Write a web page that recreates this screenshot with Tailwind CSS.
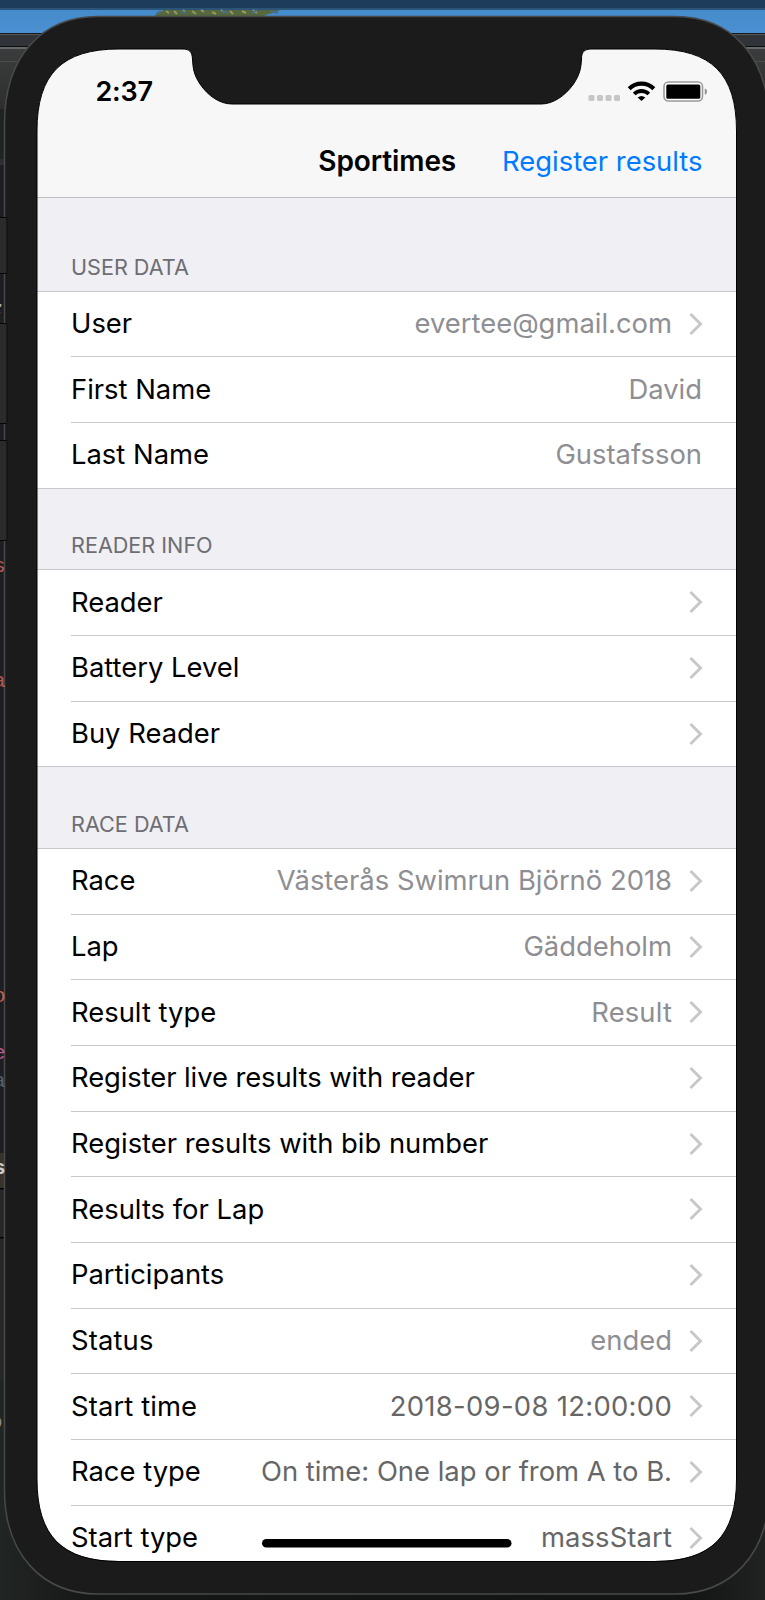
<!DOCTYPE html>
<html lang="en">
<head>
<meta charset="utf-8">
<title>Sportimes</title>
<script src="https://cdn.jsdelivr.net/npm/@tailwindcss/browser@4"></script>
</head>
<body class="bg-[#1c1e22]">
<div class="relative flex h-[1600px] w-[765px] flex-col overflow-hidden font-['Inter',sans-serif]">

  <!-- Desktop behind the device -->
  <svg class="absolute inset-0" width="765" height="1600" viewBox="0 0 765 1600" aria-hidden="true">
    <defs>
      <linearGradient id="sky" x1="0" x2="0" y1="0" y2="1"><stop offset="0" stop-color="#458ccc"/><stop offset="1" stop-color="#4b90d2"/></linearGradient>
      <linearGradient id="bar" x1="0" x2="0" y1="0" y2="1"><stop offset="0" stop-color="#3b3d3c"/><stop offset="1" stop-color="#2d2f2e"/></linearGradient>
      <linearGradient id="base" x1="0" x2="1" y1="0" y2="0"><stop offset="0" stop-color="#212524"/><stop offset=".12" stop-color="#151716"/><stop offset=".9" stop-color="#131414"/><stop offset="1" stop-color="#202322"/></linearGradient>
    </defs>
    <rect width="765" height="1600" fill="#1c1e22"/>
    <rect width="765" height="8" fill="#1d3c5b"/>
    <rect y="8" width="765" height="2" fill="#2b5478"/>
    <rect y="10" width="765" height="23" fill="url(#sky)"/>
    <path d="M154 16l6-4 4-2h116l-6 3-6 1-4 2z" fill="#55683f"/>
    <path d="M166 11l3 2m5-2 3 3m6-4 2 2m7-1 4 3m5-4 3 2m8 0 4 2m5-4 3 2m6-1 3 3m9-3 4 2m7-3 4 3" stroke="#96985e" stroke-width="2"/>
    <path d="M156 14l5-3m20 0 4 2m37-2 6 2m24 0 5-3m14 1 7 2" stroke="#466e94" stroke-width="2"/>
    <rect y="33" width="765" height="1" fill="#151617"/>
    <rect y="34" width="765" height="1" fill="#56585a"/>
    <rect y="35" width="765" height="11" fill="#303438"/>
    <rect y="46" width="765" height="1" fill="#0c0d0d"/>
    <rect y="47" width="765" height="2" fill="#65676a"/>
    <rect y="49" width="765" height="60" fill="url(#bar)"/>
    <rect y="61" width="765" height="1" fill="#4b4c4b"/>
    <rect y="109" width="5" height="50" fill="#202324"/>
    <rect y="159" width="5" height="6" fill="#2c2e31"/>
    <rect y="1153" width="5" height="35" fill="#38332a"/>
    <rect y="1188" width="5" height="412" fill="#262827"/>
    <rect y="1188" width="5" height="1.5" fill="#000"/>
    <rect y="1237" width="5" height="1.5" fill="#000"/>
    <rect y="1380" width="765" height="220" fill="url(#base)"/>
    <!-- Device body -->
    <path d="M4.5 124C4.5 55 43 16.500 98 16.500H675C730 16.500 769 55 769 124V1490C769 1555 730 1594 675 1594H98C43 1594 4.500 1555 4.500 1490Z" fill="#1b1b1b" stroke="#47494a" stroke-width="1.5"/>
    <!-- Editor text showing at the left edge -->
    <g font-family="Liberation Mono, monospace" font-size="21" text-anchor="end">
      <text x="5" y="315" fill="#aaa" font-weight="bold" font-style="italic">;</text>
      <text x="5.500" y="572" fill="#b95850">s</text>
      <text x="5.500" y="687" fill="#b95850">a</text>
      <text x="5.500" y="1002" fill="#c4604b">o</text>
      <text x="5.500" y="1059" fill="#c0568d">e</text>
      <text x="5.500" y="1087" fill="#56616d">a</text>
      <text x="5.500" y="1174" fill="#ccc" font-weight="bold">s</text>
      <text x="2.500" y="1428" fill="#888">o</text>
    </g>
    <g fill="#2b2b2b" stroke="#060606"><path d="M-1 217.500H7V273.500H-1zM-1 323.500H7V423.500H-1zM-1 440.500H7V540.500H-1z"/></g>
    <path d="M7 210V545" stroke="#1b1b1b"/>
  </svg>

  <main class="relative ml-[37px] mt-[49px] flex h-[1512.500px] w-[699.500px] flex-col bg-white text-[27.4px] leading-8 text-black [clip-path:path('M0_82C0_25_25_0_82_0H617.500C674.500_0_699.500_25_699.500_82V1430C699.500_1487_674.500_1512_617.500_1512H82C25_1512_0_1487_0_1430Z')]">
    <header class="flex h-[149px] shrink-0 flex-col border-b border-[#bfbfc3] bg-[#f7f7f8]">
      <div class="flex h-[84px] items-center justify-between pl-[58.500px] pr-[29.500px]">
        <span class="pt-px text-[27px] font-semibold tracking-[-0.2px]">2:37</span>
        <svg width="120" height="24" viewBox="587 78 120 24" aria-label="Signal, Wi-Fi, battery">
          <g fill="#c6c6c8"><rect x="588.500" y="94" width="6" height="6" rx="1.500"/><rect x="597" y="94" width="6" height="6" rx="1.500"/><rect x="605.500" y="94" width="6" height="6" rx="1.500"/><rect x="614" y="94" width="6" height="6" rx="1.500"/></g>
          <path d="M629.200 87.700A17.600 17.600 0 0 1 653.800 87.700" fill="none" stroke="#000" stroke-width="4.200"/>
          <path d="M634.200 93A10.400 10.400 0 0 1 648.800 93" fill="none" stroke="#000" stroke-width="3.800"/>
          <path d="M641.500 99.900L637.700 96.400Q641.500 93.400 645.300 96.400Z"/>
          <rect x="664" y="81" width="38.500" height="19" rx="4.500" fill="#fff" stroke="#9b9b9b" stroke-width="1.600"/>
          <rect x="666.300" y="83.500" width="34" height="14.300" rx="1.500"/>
          <path d="M704.800 87.500Q707 88 707 90.500T704.800 93.700Z" fill="#8d8d8d"/>
        </svg>
      </div>
      <div class="grid grid-cols-[1fr_auto_1fr] items-center pl-[33px] pr-[34px] pt-[11.500px]">
        <span></span>
        <h1 class="pl-[2px] text-[28px] font-semibold tracking-[-0.1px]">Sportimes</h1>
        <a class="justify-self-end whitespace-nowrap text-[#007aff]">Register results</a>
      </div>
    </header>
    <div id="list" class="flex flex-col"></div>
  </main>

  <!-- Notch and home indicator -->
  <svg class="absolute inset-0" width="765" height="1600" viewBox="0 0 765 1600" aria-hidden="true">
    <path d="M182 48.500C190 48.500 192 52 192.500 59C193 68 193.500 74 200 84C208 96 220 104 232 104H541C553 104 565 96 573.500 84C580 74 581 68 581.500 59C581.500 52 584 48.500 592 48.500Z" fill="#1b1b1b"/>
    <path d="M37 131C37 74 62 49 119 49H182C190 49 192 52 192.500 59C193 68 193.500 74 200 84C208 96 220 104 232 104H541C553 104 565 96 573.500 84C580 74 581 68 581.500 59C581.500 52 584 49 592 49H654.500C711.500 49 736.500 74 736.500 131V1479C736.500 1536 711.500 1561.500 654.500 1561.500H119C62 1561.500 37 1536 37 1479Z" fill="none" stroke="#000"/>
    <rect x="262" y="1539" width="249.500" height="8.500" rx="4.250"/>
  </svg>
</div>
<script>
// Row format: [label, value, has chevron, darker value]
const sections = [
  ['USER DATA', [['User', 'evertee@gmail.com', 1], ['First Name', 'David', 0], ['Last Name', 'Gustafsson', 0]]],
  ['READER INFO', [['Reader', '', 1], ['Battery Level', '', 1], ['Buy Reader', '', 1]]],
  ['RACE DATA', [['Race', 'Västerås Swimrun Björnö 2018', 1], ['Lap', 'Gäddeholm', 1], ['Result type', 'Result', 1],
    ['Register live results with reader', '', 1], ['Register results with bib number', '', 1], ['Results for Lap', '', 1],
    ['Participants', '', 1], ['Status', 'ended', 1], ['Start time', '2018-09-08 12:00:00', 1, 1],
    ['Race type', 'On time: One lap or from A to B.', 1, 1], ['Start type', 'massStart', 1, 1]]]
];
const chevron = '<svg class="ml-[17px] mt-px shrink-0" width="14" height="24" viewBox="0 0 14 24" fill="none" stroke="#c7c7cc" stroke-width="3"><path d="M1.500 2L11.500 12L1.500 22"/></svg>';
const tracking = { 'Register live results with reader': 'tracking-[-0.08px]', 'Start time': 'tracking-[0.12px]', 'Status': 'tracking-[0.15px]' };
const valueTracking = { '2018-09-08 12:00:00': 'tracking-[0.32px]', 'massStart': 'tracking-[0.12px]', 'Result': 'tracking-[0.15px]' };
document.getElementById('list').innerHTML = sections.map(([title, rows], s) => `
  <section class="flex flex-col">
    <h2 class="flex items-end bg-[#efeff4] pb-[12px] pl-[34px] text-[21.600px] leading-6 text-[#6d6d72] ${s ? 'h-[81.700px] border-t border-[#c8c7cc]' : 'h-[92.700px]'}">${title}</h2>
    ${rows.map(([label, value, arrow, dark], i) => `
    <div class="h-[65.680px] pl-[34px] ${i ? '' : 'border-t border-[#c8c7cc]'}">
      <div class="flex h-full items-center justify-between whitespace-nowrap pr-[33.500px] pb-[2px] ${i ? 'border-t border-[#c8c7cc]' : ''}">
        <span class="${tracking[label] || ''}">${label}</span>
        <span class="flex items-center ${arrow ? '' : 'pr-px'} ${dark ? 'text-[#666666]' : 'text-[#8e8e93]'}"><span class="${valueTracking[value] || ''}">${value}</span>${arrow ? chevron : ''}</span>
      </div>
    </div>`).join('')}
  </section>`).join('');
</script>
</body>
</html>
